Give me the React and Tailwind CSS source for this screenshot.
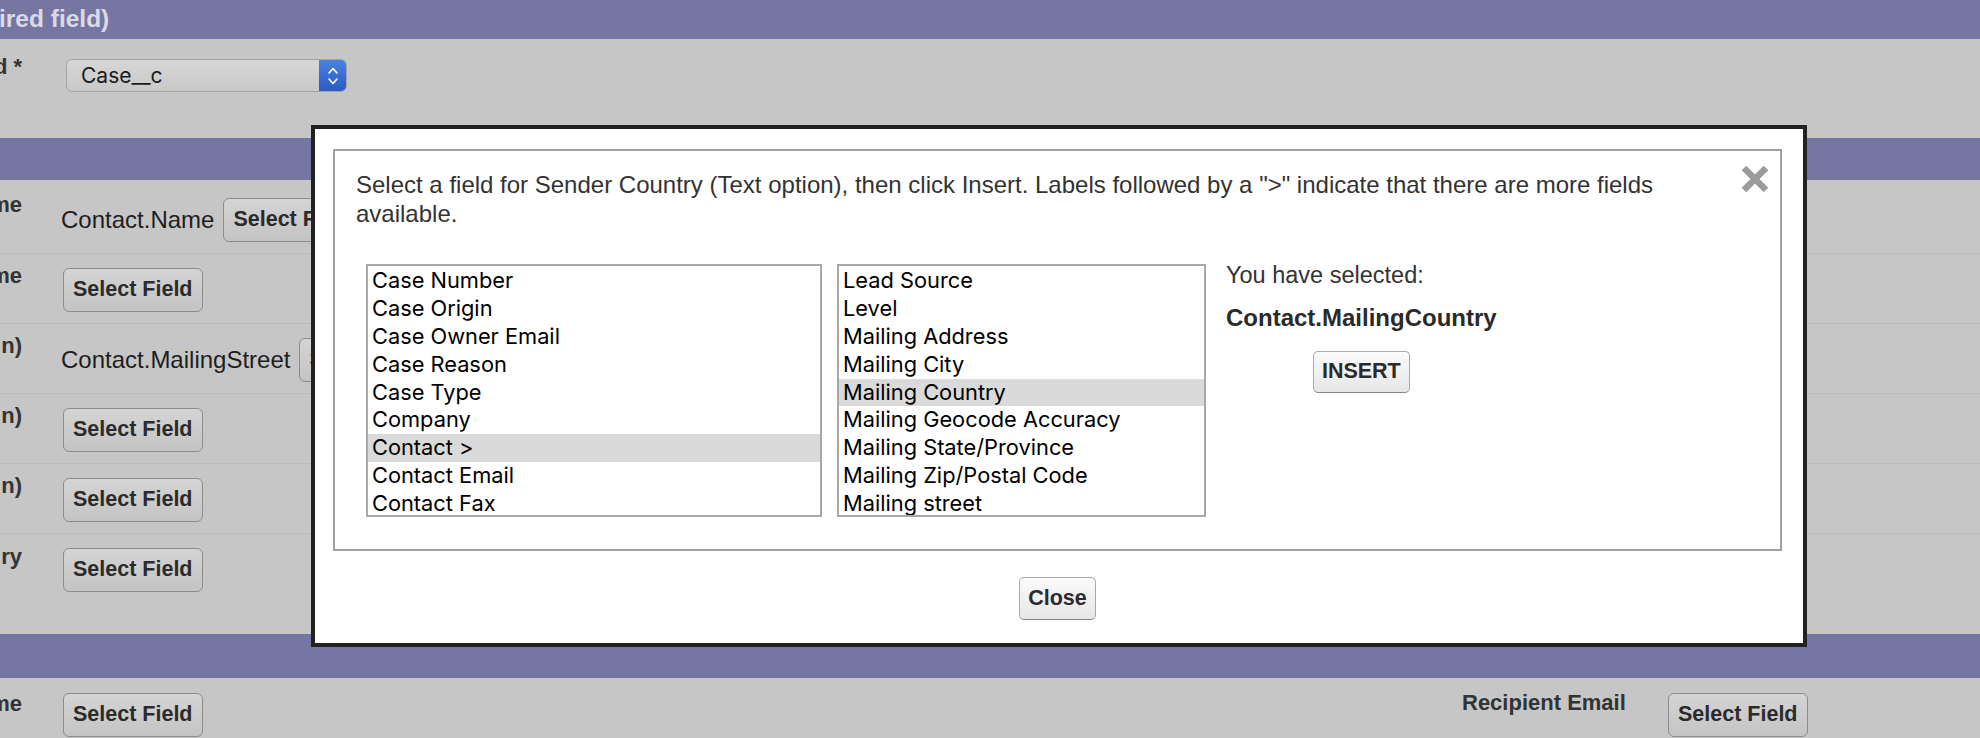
import React from "react";

function Label({ children, className = "" }) {
  return (
    <div className={"w-[22px] shrink-0 flex justify-end whitespace-nowrap text-[22px] leading-[26px] font-bold text-[#333] " + className}>
      <span>{children}</span>
    </div>
  );
}

function DimBtn({ children }) {
  return (
    <button className="h-[44px] shrink-0 px-[9px] rounded-[6px] border border-[#8c8c8c] bg-[linear-gradient(to_bottom,#d4d4d4,#c4c4c4)] text-[21.5px] leading-none font-bold text-[#2b2b2b] whitespace-nowrap">
      {children}
    </button>
  );
}

function LightBtn({ children, className = "" }) {
  return (
    <button className={"px-[8px] rounded-[5px] border border-[#a9a9a9] border-b-[#868686] bg-[linear-gradient(to_bottom,#fbfbfb,#e6e6e6)] text-[21.5px] leading-none font-bold text-[#2b2b2b] " + className}>
      {children}
    </button>
  );
}

function ListBox({ items, selected, className = "" }) {
  return (
    <div className={"h-[253px] shrink-0 border-2 border-[#a8a8a8] bg-white overflow-hidden pt-[1px] font-['Inter',sans-serif] " + className}>
      {items.map((t, i) => (
        <div
          key={t}
          className={
            "px-[4px] h-[27.9px] leading-[27.9px] text-[21.8px] text-black whitespace-nowrap " +
            (i === selected ? "bg-[#dadada]" : "")
          }
        >
          {t}
        </div>
      ))}
    </div>
  );
}

export default function App() {
  const left = [
    "Case Number",
    "Case Origin",
    "Case Owner Email",
    "Case Reason",
    "Case Type",
    "Company",
    "Contact >",
    "Contact Email",
    "Contact Fax",
  ];
  const right = [
    "Lead Source",
    "Level",
    "Mailing Address",
    "Mailing City",
    "Mailing Country",
    "Mailing Geocode Accuracy",
    "Mailing State/Province",
    "Mailing Zip/Postal Code",
    "Mailing street",
  ];

  return (
    <div className="relative w-[1980px] h-[738px] overflow-hidden bg-[#c6c6c6] font-['Liberation_Sans',Arial,sans-serif]">
      {/* Bar 1 */}
      <div className="h-[39px] bg-[#7676a3] flex items-center">
        <span className="-ml-[1px] text-[24.5px] font-bold text-[#dadae3] whitespace-nowrap">ired field)</span>
      </div>

      {/* Select row */}
      <div className="h-[99px] flex items-start">
        <Label className="pt-[15px]">d *</Label>
        <div className="ml-[44px] mt-[20px] w-[281px] h-[33px] flex rounded-[6px] border border-[#a4a4a4] overflow-hidden bg-[linear-gradient(to_bottom,#d6d6d6,#c9c9c9)]">
          <span className="pl-[14px] pt-[1px] flex items-center text-[21px] text-[#1a1a1a] font-['Inter',sans-serif]">Case__c</span>
          <span className="ml-auto w-[27px] h-full flex items-center justify-center bg-[linear-gradient(to_bottom,#4a82e2,#2a5bc6)]">
            <svg width="12" height="22" viewBox="0 0 12 22" fill="none" stroke="white" strokeWidth="1.6" strokeLinecap="round" strokeLinejoin="round">
              <path d="M2 8 L6 3.5 L10 8" />
              <path d="M2 14 L6 18.5 L10 14" />
            </svg>
          </span>
        </div>
      </div>

      {/* Bar 2 */}
      <div className="h-[42px] bg-[#7676a3]" />

      {/* Row 1 */}
      <div className="h-[74px] border-b border-[#bcbcbc] flex items-start">
        <Label className="pt-[12px]">me</Label>
        <div className="ml-[39px] pt-[18px] flex items-center gap-[9px]">
          <span className="text-[24px] text-[#1e1e1e] whitespace-nowrap">Contact.Name</span>
          <DimBtn>Select Field</DimBtn>
        </div>
      </div>

      {/* Row 2 */}
      <div className="h-[70px] border-b border-[#bcbcbc] flex items-start">
        <Label className="pt-[9px]">me</Label>
        <div className="ml-[41px] pt-[14px]">
          <DimBtn>Select Field</DimBtn>
        </div>
      </div>

      {/* Row 3 */}
      <div className="h-[70px] border-b border-[#bcbcbc] flex items-start">
        <Label className="pt-[9px]">n)</Label>
        <div className="ml-[39px] pt-[14px] flex items-center gap-[9px]">
          <span className="text-[24px] text-[#1e1e1e] whitespace-nowrap">Contact.MailingStreet</span>
          <DimBtn>Select Field</DimBtn>
        </div>
      </div>

      {/* Row 4 */}
      <div className="h-[70px] border-b border-[#bcbcbc] flex items-start">
        <Label className="pt-[9px]">n)</Label>
        <div className="ml-[41px] pt-[14px]">
          <DimBtn>Select Field</DimBtn>
        </div>
      </div>

      {/* Row 5 */}
      <div className="h-[70px] border-b border-[#bcbcbc] flex items-start">
        <Label className="pt-[9px]">n)</Label>
        <div className="ml-[41px] pt-[14px]">
          <DimBtn>Select Field</DimBtn>
        </div>
      </div>

      {/* Row 6 */}
      <div className="h-[100px] flex items-start">
        <Label className="pt-[10px]">ry</Label>
        <div className="ml-[41px] pt-[14px]">
          <DimBtn>Select Field</DimBtn>
        </div>
      </div>

      {/* Bar 3 */}
      <div className="h-[44px] bg-[#7676a3]" />

      {/* Row 7 */}
      <div className="h-[60px] flex items-start">
        <Label className="pt-[13px]">me</Label>
        <div className="ml-[41px] pt-[15px] w-[1399px]">
          <DimBtn>Select Field</DimBtn>
        </div>
        <div className="pt-[12px] w-[206px] text-[22px] leading-[26px] font-bold text-[#333] whitespace-nowrap">
          Recipient Email
        </div>
        <div className="pt-[15px]">
          <DimBtn>Select Field</DimBtn>
        </div>
      </div>

      {/* Modal */}
      <div className="absolute left-[311px] top-[125px] w-[1496px] h-[522px] border-4 border-[#222] bg-white pl-[18px] pr-[21px] pt-[20px]">
        <div className="relative h-[402px] border-2 border-[#a0a0a0] pl-[21px] pt-[19px]">
          <p className="w-[1330px] text-[24px] leading-[29px] text-[#333]">
            Select a field for Sender Country (Text option), then click Insert. Labels followed by a "&gt;" indicate that there are more fields available.
          </p>
          <div className="mt-[36px] ml-[10px] flex items-start">
            <ListBox items={left} selected={6} className="w-[456px]" />
            <ListBox items={right} selected={4} className="ml-[15px] w-[369px]" />
            <div className="ml-[20px] -mt-[3px] inline-flex flex-col">
              <span className="text-[23.5px] leading-[28px] text-[#333] whitespace-nowrap">You have selected:</span>
              <span className="mt-[15px] text-[24px] leading-[28px] font-bold text-[#2a2a2a] whitespace-nowrap">Contact.MailingCountry</span>
              <LightBtn className="self-center mt-[19px] h-[42px]">INSERT</LightBtn>
            </div>
          </div>
          <div className="absolute top-[13px] right-[10px]">
            <svg width="30" height="30" viewBox="0 0 30 30">
              <path d="M4 4 L26 26 M26 4 L4 26" stroke="#9b9b9b" strokeWidth="6.5" />
            </svg>
          </div>
        </div>
        <div className="mt-[26px] flex justify-center">
          <LightBtn className="h-[43px]">Close</LightBtn>
        </div>
      </div>
    </div>
  );
}
